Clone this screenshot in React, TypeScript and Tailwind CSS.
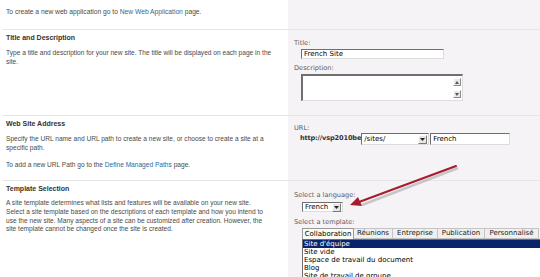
import React from 'react';

const leftFont = { fontFamily: '"Liberation Sans", Arial, sans-serif' };
const rightFont = { fontFamily: '"DejaVu Sans", Verdana, sans-serif' };

const inset =
  'border border-t-[#6f6f6f] border-l-[#6f6f6f] border-b-[#dcdcdc] border-r-[#dcdcdc] bg-white';

const DropButton = () => (
  <div className="w-[9px] h-[9px] bg-[#e8e6e2] border border-t-white border-l-white border-b-[#7a7a7a] border-r-[#7a7a7a] flex items-center justify-center">
    <svg width="5" height="3" viewBox="0 0 5 3">
      <path d="M0 0h5L2.5 3z" fill="#222" />
    </svg>
  </div>
);

const ScrollBtn = ({ up }: { up?: boolean }) => (
  <div className="w-[8px] h-[8px] bg-[#ebe9e5] border border-t-white border-l-white border-b-[#8a8a8a] border-r-[#8a8a8a] flex items-center justify-center">
    <svg width="4" height="3" viewBox="0 0 4 3">
      <path d={up ? 'M0 3h4L2 0z' : 'M0 0h4L2 3z'} fill="#555" />
    </svg>
  </div>
);

const Heading = ({ children }: { children: React.ReactNode }) => (
  <div className="text-[7px] leading-[9px] font-bold text-[#333]">{children}</div>
);

const Label = ({ children }: { children: React.ReactNode }) => (
  <div className="text-[6.6px] leading-[9px] text-[#5a5a5a]">{children}</div>
);

const tabs = [
  { name: 'Collaboration', w: 52 },
  { name: 'Réunions', w: 39 },
  { name: 'Entreprise', w: 45 },
  { name: 'Publication', w: 47 },
  { name: 'Personnalisé', w: 54 },
];

const templates = [
  "Site d'équipe",
  'Site vide',
  'Espace de travail du document',
  'Blog',
  'Site de travail de groupe',
];

export default function App() {
  return (
    <div className="relative w-[540px] h-[277px] overflow-hidden bg-white flex flex-col">
      {/* intro */}
      <div className="flex h-[29px] shrink-0">
        <div className="w-[288px] pl-[6px] pt-[7px] text-[6.7px] leading-[9px] text-[#4a4a4a]" style={leftFont}>
          To create a new web application go to <span className="text-[#1f6b9a]">New Web Application</span> page.
        </div>
        <div className="flex-1 bg-[#f6f3f6]" />
      </div>

      {/* title and description */}
      <div className="flex h-[86px] shrink-0 ml-[3px]">
        <div className="w-[285px] border-t border-[#e4e4e4] pl-[3px] pr-[6px] pt-[3px]" style={leftFont}>
          <Heading>Title and Description</Heading>
          <div className="mt-[6px] text-[6.6px] leading-[9px] text-[#4a4a4a]">
            Type a title and description for your new site. The title will be displayed on each page in the site.
          </div>
        </div>
        <div className="flex-1 bg-[#f6f3f6] border-t border-[#e8e4e8] pl-[6px] pt-[9px]" style={rightFont}>
          <Label>Title:</Label>
          <div className={`${inset} mt-[1px] ml-[7px] w-[143px] h-[10px] flex items-center pl-[2px] text-[7px] text-black`}>
            French Site
          </div>
          <div className="mt-[5px]">
            <Label>Description:</Label>
          </div>
          <div className={`${inset} border-t-2 border-l-2 mt-[1px] ml-[7px] w-[162px] h-[27px] flex justify-end`}>
            <div className="flex flex-col justify-between py-[2px] pr-[1px]">
              <ScrollBtn up />
              <ScrollBtn />
            </div>
          </div>
        </div>
      </div>

      {/* web site address */}
      <div className="flex h-[65px] shrink-0 ml-[3px]">
        <div className="w-[285px] border-t border-[#e4e4e4] pl-[3px] pr-[6px] pt-[3px]" style={leftFont}>
          <Heading>Web Site Address</Heading>
          <div className="mt-[6px] text-[6.6px] leading-[9px] text-[#4a4a4a]">
            Specify the URL name and URL path to create a new site, or choose to create a site at a specific path.
          </div>
          <div className="mt-[8px] text-[6.6px] leading-[9px] text-[#4a4a4a]">
            To add a new URL Path go to the <span className="text-[#1f6b9a]">Define Managed Paths</span> page.
          </div>
        </div>
        <div className="flex-1 bg-[#f6f3f6] border-t border-[#e8e4e8] pl-[6px] pt-[8px]" style={rightFont}>
          <Label>URL:</Label>
          <div className="flex items-center ml-[6px] h-[12px]">
            <span className="text-[6.6px] font-bold text-[#333] whitespace-nowrap tracking-[-0.15px]">http://vsp2010be</span>
            <div className={`${inset} w-[68px] h-[12px] flex items-center justify-between pl-[2px] pr-[1px] text-[7px] text-black`}>
              <span>/sites/</span>
              <DropButton />
            </div>
            <div className={`${inset} ml-[1px] w-[80px] h-[12px] flex items-center pl-[2px] text-[7px] text-black`}>
              French
            </div>
          </div>
        </div>
      </div>

      {/* template selection */}
      <div className="flex flex-1 ml-[3px]">
        <div className="w-[285px] border-t border-[#e4e4e4] pl-[3px] pr-[4px] pt-[3px]" style={leftFont}>
          <Heading>Template Selection</Heading>
          <div className="mt-[6px] text-[6.6px] leading-[8.8px] text-[#4a4a4a] whitespace-nowrap">
            A site template determines what lists and features will be available on your new site.
            <br />
            Select a site template based on the descriptions of each template and how you intend to
            <br />
            use the new site. Many aspects of a site can be customized after creation. However, the
            <br />
            site template cannot be changed once the site is created.
          </div>
        </div>
        <div className="flex-1 bg-[#f6f3f6] border-t border-[#e8e4e8] pl-[6px] pt-[10px] overflow-hidden" style={rightFont}>
          <Label>Select a language:</Label>
          <div className={`${inset} mt-[2px] ml-[8px] w-[41px] h-[10px] flex items-center justify-between pl-[2px] pr-[1px] text-[7px] text-black`}>
            <span>French</span>
            <DropButton />
          </div>
          <div className="mt-[6px]">
            <Label>Select a template:</Label>
          </div>
          <div className="ml-[8px] mt-[1px] flex h-[11px]">
            {tabs.map((t, i) => (
              <div
                key={t.name}
                className={
                  i === 0
                    ? 'h-full bg-[#fbfaf2] border border-b-0 border-[#9a9a9a] flex items-center justify-center text-[7px] text-black shrink-0'
                    : 'h-full bg-[#efefef] border border-l-0 border-[#c4c4c4] flex items-center justify-center text-[7px] text-[#222] shrink-0'
                }
                style={{ width: t.w }}
              >
                {t.name}
              </div>
            ))}
          </div>
          <div className="ml-[8px] w-[260px] h-[40px] overflow-hidden bg-white border-l border-t border-[#6f6f6f] text-[7px] leading-[8px]">
            {templates.map((t, i) => (
              <div key={t} className={i === 0 ? 'bg-[#0a246a] text-white pl-[1px]' : 'text-black pl-[1px]'}>
                {t}
              </div>
            ))}
          </div>
        </div>
      </div>

      {/* red arrow */}
      <svg className="absolute left-0 top-0 pointer-events-none" width="540" height="277">
        <line x1="458" y1="168" x2="362" y2="205" stroke="#9a9a9a" strokeOpacity="0.5" strokeWidth="2.5" />
        <line x1="456" y1="166" x2="359" y2="202" stroke="#a51d2d" strokeWidth="2" strokeLinecap="round" />
        <path d="M350 205 L358 197 L362 206 Z" fill="#a51d2d" />
      </svg>
    </div>
  );
}
